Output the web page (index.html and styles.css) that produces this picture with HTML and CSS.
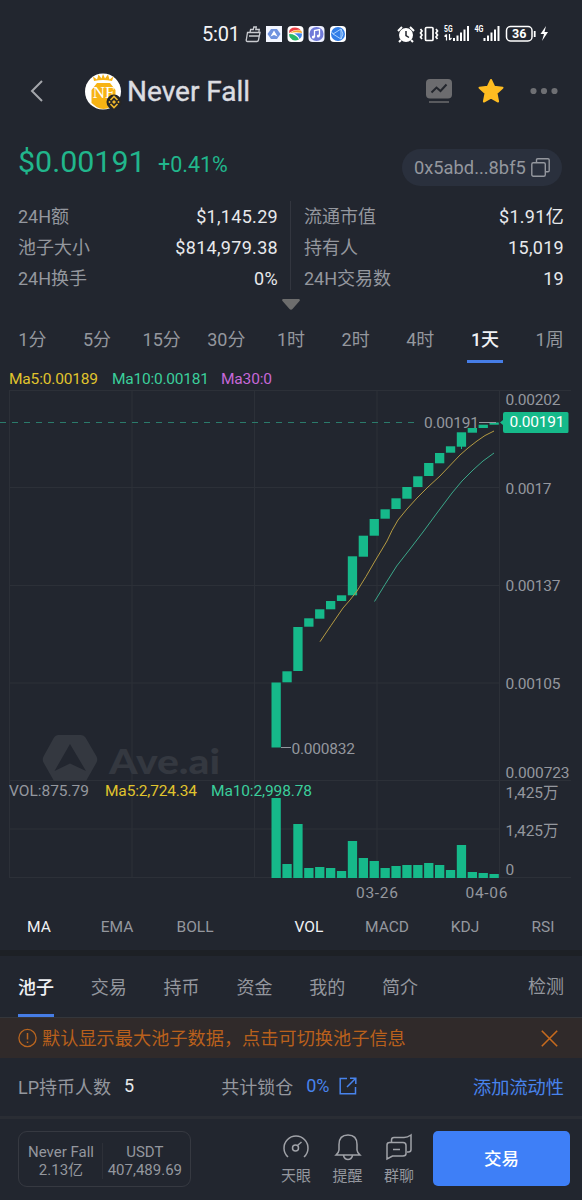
FILE: index.html
```html
<!DOCTYPE html>
<html lang="zh-CN">

<head>
    <meta charset="UTF-8">
    <meta name="viewport" content="width=device-width, initial-scale=1.0">
    <title>Never Fall</title>
    <link rel="stylesheet" href="styles.css">
</head>

<body>
    <!-- Status bar -->
    <div class="status-bar">
        <span class="clock">5:01</span>
        <svg class="status-apps" width="102" height="18" viewBox="0 0 102 18">
            <path d="M2.5 7.5h12.500l-1.500 7.500q-.3 1.500-1.600 1.500H2.500q-1.500 0-1.200-1.500zM4 11h10M5 7.500l.6-3h2.700l.5-2.500h2.500l-.5 2.500h3.500l-.5 3" fill="none" stroke="#c9cbd0" stroke-width="1.300" />
            <g>
                <rect x="21" y="1" width="16" height="16" fill="#f3f6ff" />
                <path d="M26 4h6l3.500 5-3.500 5h-6l-3.500-5z" fill="#6f93df" />
                <path d="M29 5.500l3.500 6-3.500-1.500-3.500 1.500z" fill="#fff" />
                <rect x="42.500" y="1" width="16" height="16" rx="4" fill="#fff" />
                <path d="M44 8q0-5.500 6-5.500 4 0 5.500 2.500-6-1-11.500 3z" fill="#ee3f44" />
                <path d="M44.500 8.500q5-4.500 11.500-3 1 1 1 2.500-7-1.500-12.500.5z" fill="#f7a72d" />
                <path d="M54 14.500q-6 2.500-9-2-1-1-.8-3.500 7 0 9.800 5.500z" fill="#27b869" />
                <path d="M49 8.500q5-.5 8 0 0 4-2.500 5.500-1-4-5.500-5.500z" fill="#4285e8" />
                <rect x="63.500" y="1" width="16" height="16" rx="4" fill="#eef0ff" />
                <circle cx="71.500" cy="9" r="7" fill="#6f79d9" />
                <path d="M69.500 12V5.500l5-1V11" fill="none" stroke="#fff" stroke-width="1.300" />
                <circle cx="68.300" cy="12" r="1.500" fill="#fff" />
                <circle cx="73.300" cy="11" r="1.500" fill="#fff" />
                <rect x="85" y="1" width="16" height="16" rx="4" fill="#fff" />
                <circle cx="93" cy="9" r="7" fill="#327ee8" />
                <path d="M88 9l8-5v10zM88 9l-2-3M96 4l2 5-2 5" fill="none" stroke="#a9d2ff" stroke-width="1" />
            </g>
        </svg>
        <svg class="status-signals" width="156" height="22" viewBox="0 0 156 22">
            <!-- alarm -->
            <circle cx="10" cy="12" r="7" fill="#fff" />
            <path d="M2 8l4-4M14 4l4 4M5 17l-2 2M15 17l2 2" stroke="#fff" stroke-width="2" />
            <path d="M10 8v4.500l3 2" fill="none" stroke="#21252e" stroke-width="1.500" />
            <!-- vibrate -->
            <rect x="29.500" y="4.500" width="7.500" height="13" rx="1" fill="none" stroke="#fff" stroke-width="1.700" />
            <path d="M24.500 6l1.500 2-1.500 2 1.500 2-1.500 2 1.500 2M40 6l1.500 2-1.500 2 1.500 2-1.500 2 1.500 2" fill="none" stroke="#fff" stroke-width="1.700" />
            <!-- signals -->
            <text x="48" y="9" class="net" textLength="8.500" lengthAdjust="spacingAndGlyphs">5G</text>
            <path d="M50.500 11.500v6M48.500 13.500l2-2M53.500 11v6M55.500 15l-2 2" stroke="#fff" stroke-width="1.200" />
            <path d="M58 15v3M61.500 12.500v5.500M65 9.500v8.500M68.500 6.500v11.500M72 3v15" stroke="#fff" stroke-width="2" />
            <text x="78.500" y="9" class="net" textLength="9" lengthAdjust="spacingAndGlyphs">4G</text>
            <path d="M88.500 15v3M92 12.500v5.500M95.500 9.500v8.500M99 6.500v11.500M102.500 3v15" stroke="#fff" stroke-width="2" />
            <!-- battery -->
            <rect x="110.500" y="3.500" width="25.500" height="14.500" rx="4" fill="none" stroke="#fff" stroke-width="1.500" />
            <text x="116" y="15.300" class="battery-level" textLength="14.500">36</text>
            <path d="M138.700 8v6" stroke="#fff" stroke-width="1.800" />
            <path d="M150 3l-5.500 8h3.500l-2 7 6-9h-3.500z" fill="#fff" />
        </svg>
    </div>

    <!-- Token header -->
    <div class="header">
        <svg class="back" width="14" height="24" viewBox="0 0 14 24">
            <path d="M12 2L2 12l10 10" fill="none" stroke="#a4a6ab" stroke-width="2" />
        </svg>
        <svg class="token-logo" width="37" height="37" viewBox="0 0 37 37">
            <circle cx="18" cy="18.500" r="18" fill="#fff" />
            <path d="M9 8L8 3.500l4 3 1.500-5 3 4L18 1l2 4.500 3-4 1.500 5 4-3L27 8q-9-2-18 0zM12 10h13l5.500 7v13l-5 4q-7 4-14 0l-5-4V17z" fill="#f7b314" />
            <text x="18.500" y="24.500" class="logo-text" text-anchor="middle">NF</text>
            <circle cx="29" cy="29" r="7.500" fill="#262626" />
            <path d="M25.500 27l3.500-3.500 3.500 3.500M25.500 31l3.500 3.500 3.500-3.500" fill="none" stroke="#edb62c" stroke-width="1.700" />
            <path d="M29 27l2 2-2 2-2-2zM24.500 27.800l1.200 1.200-1.200 1.200-1.200-1.200zM33.500 27.800l1.200 1.200-1.200 1.200-1.200-1.200z" fill="#edb62c" />
        </svg>
        <h1>Never Fall</h1>
        <div class="header-actions">
            <svg width="26" height="26" viewBox="0 0 26 26">
                <rect x="0" y="1" width="26" height="19.500" rx="4" fill="#6c6c6f" />
                <path d="M5.500 14.500l5-5 4 3.500 6-6.500" fill="none" stroke="#23262d" stroke-width="2" />
                <path d="M3 24h20" stroke="#6c6c6f" stroke-width="1.500" />
            </svg>
            <svg width="26" height="26" viewBox="0 0 26 26">
                <path d="M13 2l3.200 6.700 8.300 1-6 5.500 1.600 8.300L13 19.700l-7.100 3.800 1.600-8.300-6-5.500 8.300-1z" fill="#febc21" stroke="#febc21" stroke-width="2" stroke-linejoin="round" />
            </svg>
            <svg width="28" height="26" viewBox="0 0 28 26">
                <circle cx="3.500" cy="13" r="3.100" fill="#6e6f73" />
                <circle cx="14" cy="13" r="3.100" fill="#6e6f73" />
                <circle cx="24.500" cy="13" r="3.100" fill="#6e6f73" />
            </svg>
        </div>
    </div>

    <!-- Price -->
    <div class="price-row">
        <span class="price">$0.00191</span>
        <span class="change">+0.41%</span>
        <div class="address">
            <span>0x5abd...8bf5</span>
            <svg width="19" height="19" viewBox="0 0 19 19">
                <path d="M5.500 4V2q0-1.200 1.200-1.200H17q1.200 0 1.200 1.200v10.500q0 1.200-1.200 1.200h-2" fill="none" stroke="#94979e" stroke-width="1.400" />
                <rect x=".8" y="4.800" width="13.500" height="13.400" rx="1.500" fill="none" stroke="#94979e" stroke-width="1.400" />
            </svg>
        </div>
    </div>

    <div class="stats">
        <dl>
            <div><dt>24H额</dt><dd>$1,145.29</dd></div>
            <div><dt>池子大小</dt><dd>$814,979.38</dd></div>
            <div><dt>24H换手</dt><dd>0%</dd></div>
        </dl>
        <dl>
            <div><dt>流通市值</dt><dd>$1.91亿</dd></div>
            <div><dt>持有人</dt><dd>15,019</dd></div>
            <div><dt>24H交易数</dt><dd>19</dd></div>
        </dl>
    </div>
    <div class="expand">
        <svg width="18" height="11" viewBox="0 0 18 11">
            <path d="M1 0h16q1.500.5.500 2l-7 8q-1.500 1.500-3 0l-7-8Q-.5.500 1 0z" fill="#6d6d6d" />
        </svg>
    </div>

    <div class="intervals">
        <span>1分</span>
        <span>5分</span>
        <span>15分</span>
        <span>30分</span>
        <span>1时</span>
        <span>2时</span>
        <span>4时</span>
        <span class="active">1天</span>
        <span>1周</span>
    </div>

    <!-- Candles and volume -->
    <svg class="chart" width="582" height="540" viewBox="0 364 582 540">
        <path class="grid" d="M9 390.500h562M9 487.500h490.500M9 585.500h490.500M9 683h490.500M9 780.500h562M9 829h490.500M9 877.500h562M9.500 390v488M132 390v488M254.500 390v488M377 390v488M499.500 390v488" />

        <g class="watermark">
            <path d="M58 735h23q3 0 4.500 2.500l11 19q1.500 3 0 6L86 781H54L43.500 762.500q-1.500-3 0-6l10.500-19q1.500-2.500 4-2.500zM70 744L54.500 771 70 763.500l16 7.500z" fill-rule="evenodd" />
            <text x="109" y="774" textLength="111" lengthAdjust="spacingAndGlyphs">Ave.ai</text>
        </g>

        <path class="last-price" d="M0 422.500h420" />
        <g id="candles" class="bars"></g>
        <g id="volumes" class="bars"></g>
        <path class="wick" d="M461.500 446v3" />

        <polyline class="ma5-line" points="320,641.7 331,625.5 343,608 350,600 357,591 366,576.5 375,561 387,541 392,530.5 398,520 407,509 417,498 428,487 440,476 460,455 468,448 477,441 485,435.5 494,431" />
        <polyline class="ma10-line" points="374.5,601.5 385,584.5 396.7,566 410,549 423,532 437,513 452,493 462,481 473,470 483,461 494,453" />

        <path class="pointer" d="M479 422.500h17M281 747.500h10" />
        <text x="424" y="428" textLength="55">0.00191</text>
        <text x="291.500" y="753.500" textLength="63.500">0.000832</text>

        <g class="legend">
            <text x="9" y="383.500" class="ma5" textLength="89">Ma5:0.00189</text>
            <text x="112" y="383.500" class="ma10" textLength="97">Ma10:0.00181</text>
            <text x="221" y="383.500" class="ma30" textLength="51">Ma30:0</text>
            <text x="9" y="795.500" class="vol" textLength="80">VOL:875.79</text>
            <text x="105" y="795.500" class="ma5" textLength="92">Ma5:2,724.34</text>
            <text x="211" y="795.500" class="ma10" textLength="101">Ma10:2,998.78</text>
        </g>

        <g class="axis">
            <text x="505.500" y="405" textLength="55">0.00202</text>
            <text x="505.500" y="493.500" textLength="46">0.0017</text>
            <text x="505.500" y="591" textLength="55">0.00137</text>
            <text x="505.500" y="689" textLength="55">0.00105</text>
            <text x="505.500" y="777.500" textLength="64">0.000723</text>
            <text x="505.500" y="798" textLength="53">1,425万</text>
            <text x="505.500" y="836" textLength="53">1,425万</text>
            <text x="505.500" y="874.500">0</text>
            <text x="356" y="897.500" textLength="42">03-26</text>
            <text x="465.500" y="897.500" textLength="42">04-06</text>
        </g>

        <path d="M500 422.500l3-2.500v-6q0-2 2-2h62q1.500 0 1.500 1.500v18q0 1.500-1.500 1.500h-62q-2 0-2-2v-6z" fill="#16b98a" />
        <text x="509.500" y="427" class="tag" textLength="55">0.00191</text>
    </svg>

    <div class="indicators">
        <div class="group">
            <span class="active">MA</span>
            <span>EMA</span>
            <span>BOLL</span>
        </div>
        <i class="separator"></i>
        <div class="group">
            <span class="active">VOL</span>
            <span>MACD</span>
            <span>KDJ</span>
            <span>RSI</span>
        </div>
    </div>

    <div class="tabs">
        <span class="active">池子</span>
        <span>交易</span>
        <span>持币</span>
        <span>资金</span>
        <span>我的</span>
        <span>简介</span>
        <span class="check">检测</span>
    </div>

    <div class="notice">
        <svg width="20" height="20" viewBox="0 0 20 20">
            <circle cx="9.500" cy="10" r="8.600" fill="none" stroke="#b9651f" stroke-width="1.300" />
            <path d="M9.500 5v6.500M9.500 13.500v1.500" stroke="#b9651f" stroke-width="1.500" />
        </svg>
        <span>默认显示最大池子数据，点击可切换池子信息</span>
        <svg class="close" width="17" height="17" viewBox="0 0 17 17">
            <path d="M.8.800l15.400 15.400M16.200.800L.8 16.200" stroke="#c66a1e" stroke-width="1.600" />
        </svg>
    </div>

    <div class="liquidity">
        <span>LP持币人数</span>
        <b>5</b>
        <span class="locked">共计锁仓</span>
        <a>0%</a>
        <svg width="18" height="18" viewBox="0 0 18 18">
            <path d="M8 1.500H1.200v15.300h15.300V10M11 1.200h5.800V7M16.500 1.500L8 10" fill="none" stroke="#4883ec" stroke-width="1.500" />
        </svg>
        <a class="add">添加流动性</a>
    </div>

    <!-- Bottom bar -->
    <div class="footer">
        <div class="reserves">
            <div><span>Never Fall</span><span>2.13亿</span></div>
            <div><span>USDT</span><span>407,489.69</span></div>
        </div>
        <div class="shortcuts">
            <div>
                <svg width="28" height="28" viewBox="0 0 28 28">
                    <path d="M6 24a12 12 0 1 1 16 0" />
                    <circle cx="13.500" cy="15" r="3" />
                    <path d="M15.500 12.500l4-3.500" />
                </svg>
                <span>天眼</span>
            </div>
            <div>
                <svg width="28" height="28" viewBox="0 0 28 28">
                    <path d="M5 17V11.500q0-9.500 9-9.500t9 9.500V17q0 2 3 5H2q3-3 3-5zM9.500 22.500q1 4 4.500 4t4.500-4" />
                </svg>
                <span>提醒</span>
            </div>
            <div>
                <svg width="28" height="28" viewBox="0 0 28 28">
                    <path d="M6.500 9V7q0-2.500 2.500-2.500h10q3.500 0 7-2.500V16.500q0 2.500-2.500 2.500H22M4.500 9.500h13.500q3 0 3 3v8q0 2.500-3 2.500H7.500L2 26V12q0-2.500 2.500-2.500zM8 16.500h7" />
                </svg>
                <span>群聊</span>
            </div>
        </div>
        <button class="trade">交易</button>
    </div>

    <script>
        // [top, bottom] of each candle body
        const candles = [
            [682.5, 747.5], [671.3, 682.3], [627, 671], [618.3, 626.7], [609.3, 618.7],
            [601, 609.3], [595.3, 601], [556.3, 595.3], [535.7, 556.7], [519, 535.7],
            [509.3, 518.7], [498.3, 509], [487, 498.7], [476.3, 487], [463, 476],
            [453, 463.3], [446.3, 452.7], [432.3, 446.7], [428, 432.7], [424.7, 428],
            [422.5, 424.7]
        ];
        const volumes = [80, 14, 54, 10, 11, 10, 7, 37, 20, 17, 10, 12, 13, 13, 15, 13, 8, 33, 6, 5, 4];

        function drawBar(groupId, index, top, height) {
            const rect = document.createElementNS("http://www.w3.org/2000/svg", "rect");
            rect.setAttribute("x", 271.5 + index * 10.9);
            rect.setAttribute("y", top);
            rect.setAttribute("width", 9.3);
            rect.setAttribute("height", height);
            document.getElementById(groupId).appendChild(rect);
        }

        candles.forEach(([top, bottom], i) => drawBar("candles", i, top, bottom - top));
        volumes.forEach((height, i) => drawBar("volumes", i, 878 - height, height));
    </script>
</body>

</html>
```
FILE: styles.css
```css
* {
    box-sizing: border-box;
}

body {
    margin: 0;
    width: 582px;
    height: 1200px;
    overflow: hidden;
    display: flex;
    flex-direction: column;
    background-color: #22262f;
    color: #94979e;
    font-family: Roboto, "Noto Sans CJK SC", sans-serif;
    font-size: 18px;
}

body > * {
    flex-shrink: 0;
}

svg {
    display: block;
}

/* Status bar */
.status-bar {
    display: flex;
    align-items: center;
    height: 60px;
    padding: 8px 30px 0 202px;
}

.clock {
    width: 43px;
    color: #f3f3f5;
    font-size: 20px;
    letter-spacing: -0.2px;
}

.status-signals {
    margin-left: auto;
}

.net {
    fill: #fff;
    font-size: 9px;
    font-weight: 700;
}

.battery-level {
    fill: #fff;
    font-size: 12.5px;
    font-weight: 700;
}

/* Header */
.header {
    display: flex;
    align-items: center;
    height: 62px;
    padding: 0 24px 0 30px;
}

.token-logo {
    margin-left: 41px;
}

.logo-text {
    fill: #fff;
    font-family: "Liberation Serif", serif;
    font-size: 17px;
}

h1 {
    margin: 0 0 0 5px;
    color: #dcdde1;
    font-size: 28px;
    font-weight: 400;
    -webkit-text-stroke: 0.4px #dcdde1;
}

.header-actions {
    display: flex;
    gap: 26px;
    margin-left: auto;
}

/* Price */
.price-row {
    display: flex;
    align-items: center;
    height: 81px;
    padding: 0 20px 0 18px;
    color: #21b68c;
}

.price {
    width: 140px;
    padding-bottom: 3px;
    font-size: 30.4px;
}

.change {
    font-size: 21.5px;
    padding-top: 4px;
}

.address {
    display: flex;
    align-items: center;
    justify-content: space-between;
    width: 160px;
    height: 37px;
    margin: 9px 0 0 auto;
    padding: 0 12px;
    border-radius: 19px;
    background-color: #2a303d;
    color: #94979e;
    font-size: 18.3px;
}

/* Stats */
.stats {
    display: flex;
    height: 87px;
    padding: 0 18px;
}

.stats dl {
    width: 273px;
    margin: 0;
    padding-right: 13px;
    margin-top: -2px;
}

.stats dl + dl {
    padding: 0 0 0 13px;
    box-shadow: -1px 0 #33363f;
}

.stats dl div {
    display: flex;
    justify-content: space-between;
    height: 31px;
    line-height: 31px;
}

.stats dd {
    margin: 0;
    color: #e8e9ec;
    letter-spacing: 0.3px;
}

.expand {
    display: flex;
    justify-content: center;
    height: 25px;
    padding-top: 9px;
}

.intervals {
    display: grid;
    grid-template-columns: repeat(9, 1fr);
    height: 49px;
    line-height: 49px;
    text-align: center;
}

.intervals .active,
.indicators .active,
.tabs .active {
    color: #f0f1f4;
}

.intervals .active {
    font-weight: 500;
    background: linear-gradient(#467de6, #467de6) center bottom 1px / 36px 3px no-repeat;
}

/* Chart */
.chart {
    fill: #94979e;
    font-size: 15.5px;
}

.grid {
    fill: none;
    stroke: #2c3038;
    stroke-width: 1;
}

.watermark {
    fill: #343840;
    font-family: Lato, sans-serif;
    font-size: 34px;
    font-weight: 900;
}

.bars {
    fill: #16b98a;
}

.last-price {
    stroke: #2b7b6b;
    stroke-dasharray: 6 6;
}

.wick {
    stroke: #16b98a;
}

.ma5-line,
.ma10-line {
    fill: none;
    stroke: #b49a42;
    stroke-width: 1;
    stroke-linejoin: round;
}

.ma10-line {
    stroke: #3ba88a;
}

.pointer {
    stroke: #94979e;
}

.ma5 {
    fill: #e0c42d;
}

.ma10 {
    fill: #3bcf9c;
}

.ma30 {
    fill: #c668d8;
}

.tag {
    fill: #fff;
}

/* Indicators */
.indicators {
    display: flex;
    align-items: center;
    height: 46px;
    font-size: 15.5px;
}

.group {
    display: flex;
}

.group span {
    width: 78px;
    text-align: center;
}

.separator {
    width: 1px;
    height: 25px;
    margin: 0 18px;
    background-color: #65686e;
}

/* Tabs */
.tabs {
    display: flex;
    gap: 36.8px;
    height: 68px;
    padding: 0 18px;
    border-top: 6px solid #1d2025;
    border-bottom: 1px solid #34363b;
    line-height: 63px;
}

.tabs .active {
    font-weight: 500;
    box-shadow: inset 0 -3px #467de6;
}

.tabs .check {
    margin-left: auto;
    line-height: 61px;
}

.notice {
    display: flex;
    align-items: center;
    height: 40px;
    padding: 0 24px 0 18px;
    gap: 4px;
    background-color: #302a2a;
    color: #b9601c;
    font-size: 18.2px;
}

.notice span {
    padding-bottom: 3px;
}

.close {
    margin-left: auto;
}

.liquidity {
    display: flex;
    align-items: center;
    height: 58px;
    padding: 0 18px 3px;
}

.liquidity b {
    margin-left: 13px;
    color: #e8e9ec;
    font-weight: 400;
}

.liquidity a {
    color: #4883ec;
}

.liquidity .locked {
    width: 85px;
    margin-left: 87px;
}

.liquidity svg {
    margin-left: 9px;
}

.liquidity .add {
    margin-left: auto;
    font-size: 18.2px;
}

/* Bottom bar */
.footer {
    display: flex;
    height: 85px;
    padding: 12px 12px 0 18px;
    border-top: 3px solid #2a2d34;
}

.reserves {
    display: flex;
    justify-content: space-between;
    align-items: center;
    width: 173px;
    height: 56px;
    padding: 3px 8px 0 9px;
    border: 1px solid #363941;
    border-radius: 9px;
    font-size: 15px;
    line-height: 18px;
    text-align: center;
}

.reserves span {
    display: block;
}

.reserves div + div {
    padding-left: 5px;
    border-left: 1px solid #2d3038;
}

.shortcuts {
    display: flex;
    gap: 21.5px;
    margin-left: 90px;
    font-size: 15px;
}

.shortcuts div {
    display: flex;
    flex-direction: column;
    align-items: center;
    width: 30px;
}

.shortcuts svg {
    margin-top: 2px;
    fill: none;
    stroke: #a0a2a8;
    stroke-width: 1.5;
}

.shortcuts span {
    line-height: 30px;
}

.trade {
    width: 137px;
    height: 55px;
    margin-left: auto;
    padding-bottom: 3px;
    border: none;
    border-radius: 5px;
    background-color: #3e7ff7;
    color: #fff;
    font-family: inherit;
    font-size: 17.5px;
    font-weight: 500;
}
```
